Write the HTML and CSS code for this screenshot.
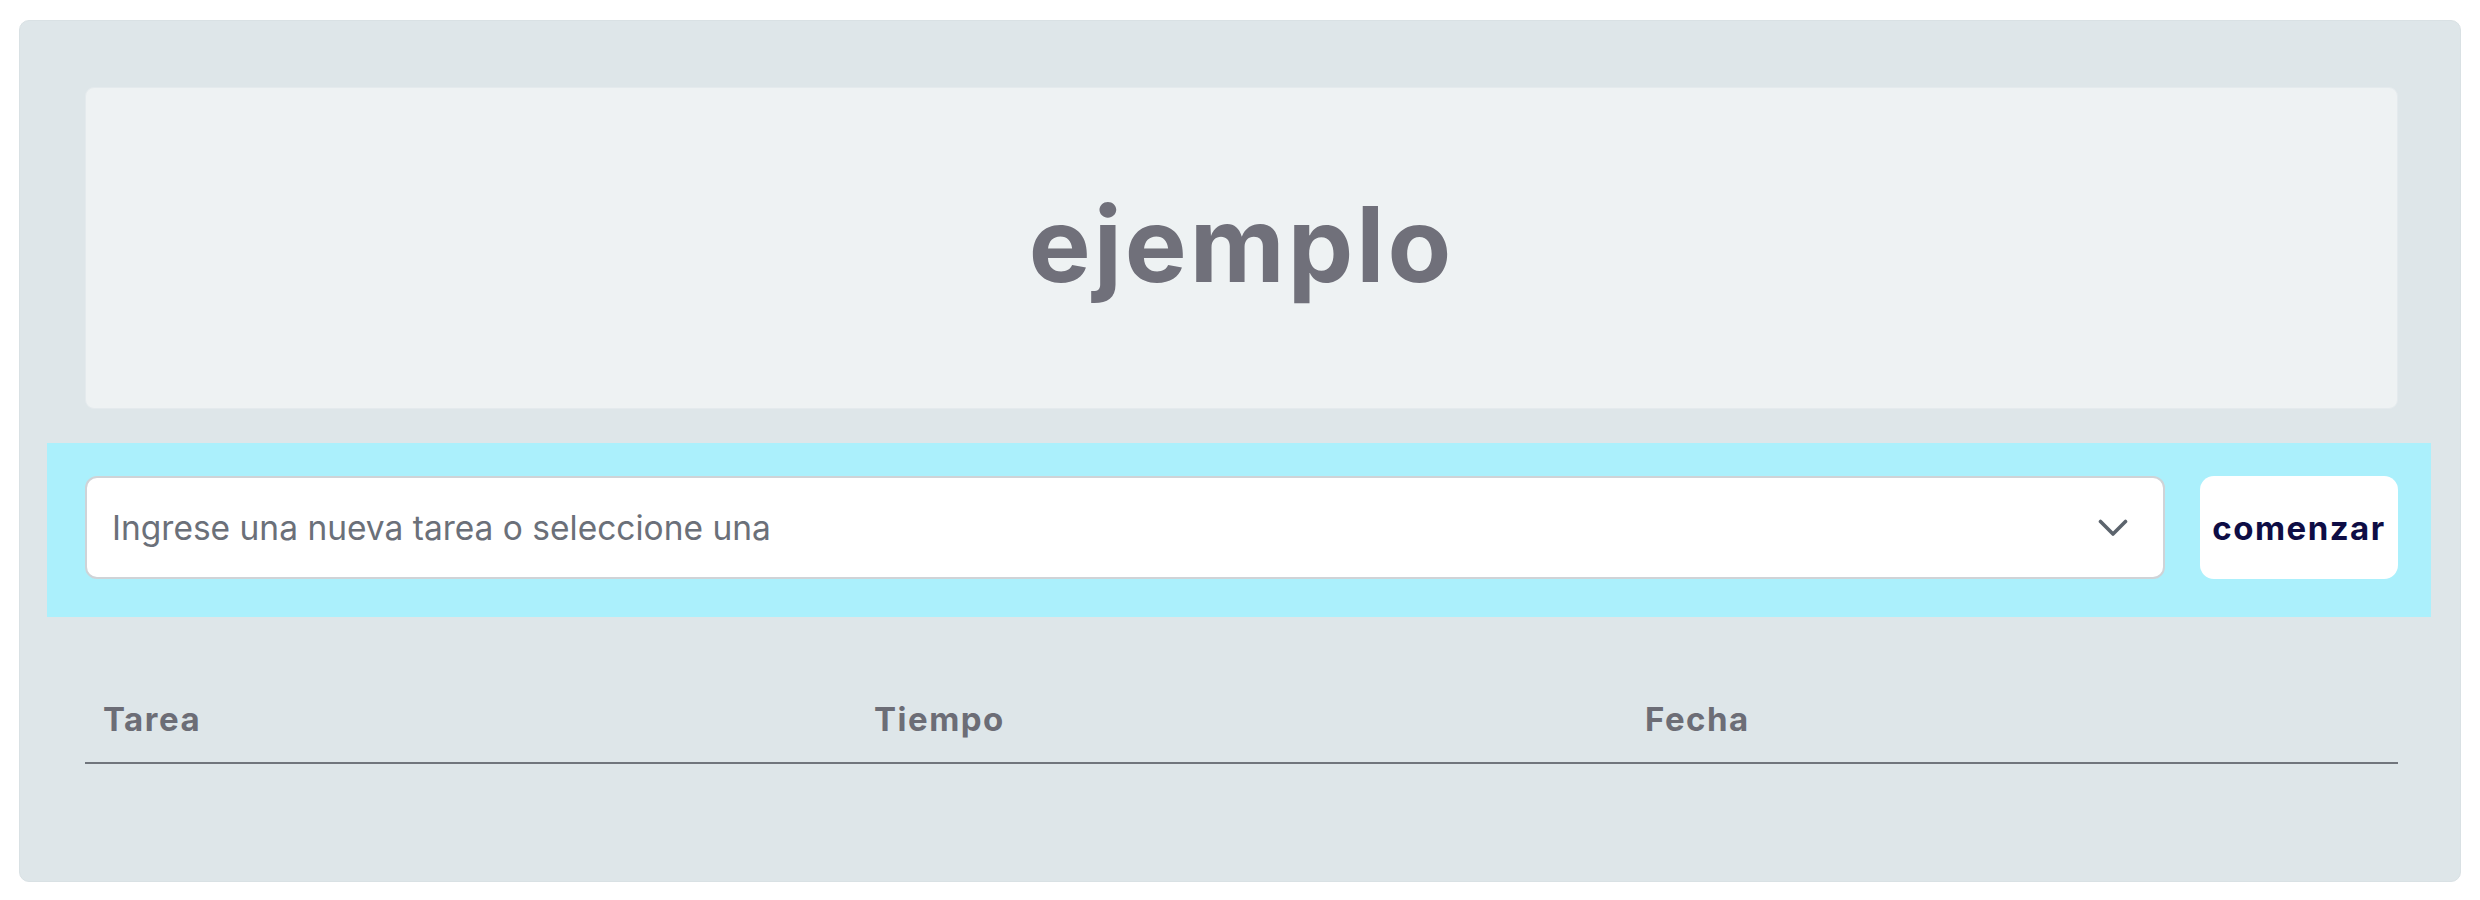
FILE: index.html
```html
<!DOCTYPE html>
<html lang="es">
<head>
<meta charset="utf-8">
<title>ejemplo</title>
<link rel="stylesheet" href="styles.css">
</head>
<body>
<div class="card">
  <header class="hero">
    <h1 class="hero-title">ejemplo</h1>
  </header>
  <div class="band">
    <div class="select">
      <span class="placeholder">Ingrese una nueva tarea o seleccione una</span>
      <svg class="chevron" width="30" height="18" viewBox="0 0 30 18" aria-hidden="true">
        <path d="M2.5 2.5 L15 15 L27.5 2.5" fill="none" stroke="#5c646d" stroke-width="3.6" stroke-linecap="round" stroke-linejoin="round"/>
      </svg>
    </div>
    <button class="start-btn" type="button">comenzar</button>
  </div>
  <table class="tasks">
    <thead>
      <tr>
        <th>Tarea</th>
        <th>Tiempo</th>
        <th>Fecha</th>
      </tr>
    </thead>
    <tbody></tbody>
  </table>
</div>
</body>
</html>
```
FILE: styles.css
```css
html, body {
  margin: 0;
  padding: 0;
  background: #ffffff;
}

body {
  font-family: Inter, "Noto Sans", sans-serif;
}

.card {
  margin: 20px 19px 0 19px;
  padding: 67px 0 117px 0;
  background: #dee6e9;
  border: 1px solid #d9e1e4;
  border-radius: 10px;
  box-sizing: border-box;
  height: 862px;
}

.hero {
  margin: -1px 62px 0 65px;
  height: 322px;
  background: #eef2f3;
  border: 1px solid #e4eaed;
  border-radius: 9px;
  box-sizing: border-box;
  display: flex;
  align-items: center;
  justify-content: center;
  padding-bottom: 8px;
}

.hero-title {
  margin: 0;
  font-family: Inter, sans-serif;
  font-weight: 700;
  font-size: 104px;
  letter-spacing: 3px;
  color: #70707a;
}

.band {
  margin: 34px 29px 0 27px;
  padding: 33px 33px 38px 38px;
  background: #abf0fc;
  display: flex;
  gap: 35px;
}

.select {
  flex: 1;
  height: 103px;
  box-sizing: border-box;
  background: #ffffff;
  border: 2px solid #cfd3d7;
  border-radius: 12px;
  display: flex;
  align-items: center;
  padding: 0 35px 0 25px;
}

.placeholder {
  flex: 1;
  font-family: Inter, sans-serif;
  font-size: 33.5px;
  color: #6b7079;
}

.chevron {
  display: block;
}

.start-btn {
  width: 198px;
  height: 103px;
  border: none;
  background: #ffffff;
  border-radius: 14px;
  font-family: Inter, sans-serif;
  font-weight: 700;
  font-size: 33px;
  letter-spacing: 1.5px;
  color: #0e0d45;
  padding: 0;
  cursor: pointer;
}

.tasks {
  margin: 60px 62px 0 65px;
  width: calc(100% - 127px);
  table-layout: fixed;
  border-collapse: collapse;
}

.tasks th {
  text-align: left;
  padding: 18px 18px;
  font-family: Inter, sans-serif;
  font-weight: 700;
  font-size: 33px;
  line-height: 49px;
  letter-spacing: 1.5px;
  color: #6c6d76;
  border-bottom: 2px solid #70757c;
}
```
